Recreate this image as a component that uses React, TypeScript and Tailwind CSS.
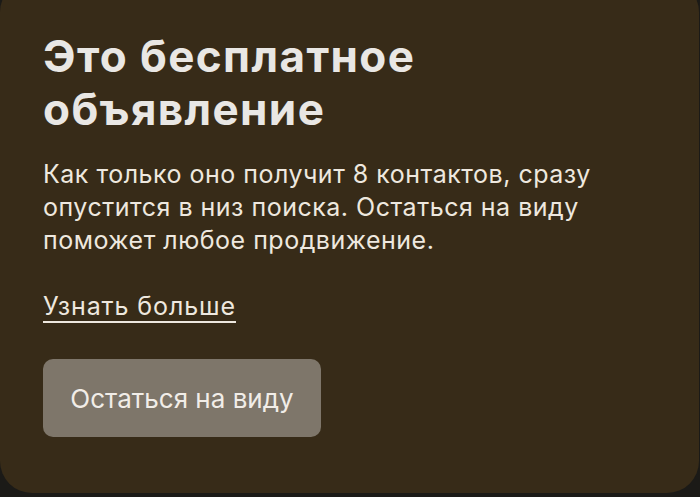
export default function App() {
  return (
    <div className="w-[700px] h-[497px] overflow-hidden bg-[#1b1a17]" style={{ fontFamily: 'Inter, "Noto Sans", sans-serif' }}>
      <div className="-mt-[20px] flex h-[513px] w-[699px] flex-col items-start rounded-[32px] bg-[#372b18] pl-[43px] pt-[50px]">
        <h1 className="text-[44px] font-bold leading-[53px] tracking-[1.4px] text-[#e9e7e4]">
          Это бесплатное
          <br />
          объявление
        </h1>
        <p className="mt-[22px] text-[25px] leading-[33px] tracking-[0.5px] text-[#eee8df]">
          Как только оно получит 8 контактов, сразу
          <br />
          опустится в низ поиска. Остаться на виду
          <br />
          поможет любое продвижение.
        </p>
        <a className="mt-[33px] block text-[25px] leading-[33px] tracking-[0.9px] text-[#eee8df] underline decoration-[2px] underline-offset-[6px]">
          Узнать больше
        </a>
        <button className="mt-[36px] h-[78px] w-[278px] rounded-[10px] bg-[#7e766a] text-[26px] text-[#f1ede8]">
          Остаться на виду
        </button>
      </div>
    </div>
  );
}
